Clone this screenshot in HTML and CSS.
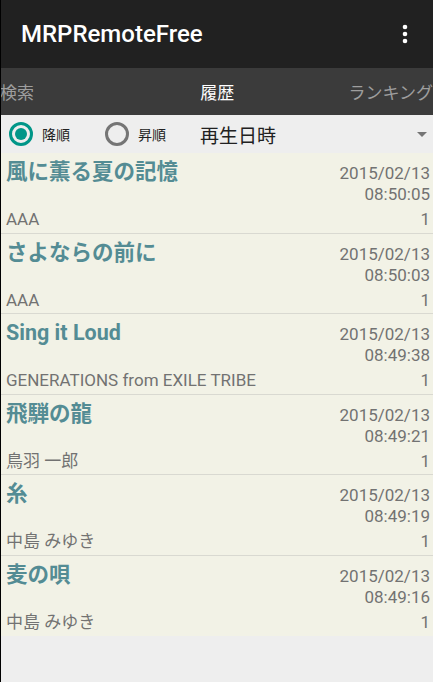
FILE: index.html
```html
<!DOCTYPE html>
<html lang="ja">
<head>
  <meta charset="UTF-8">
  <title>MRPRemoteFree</title>
  <link rel="stylesheet" href="styles.css">
</head>
<body>

  <div class="toolbar">
    <span class="app-title">MRPRemoteFree</span>
    <svg class="menu" width="6" height="20" viewBox="0 0 6 20">
      <circle cx="3" cy="3" r="2.3" fill="#fff"/>
      <circle cx="3" cy="10" r="2.3" fill="#fff"/>
      <circle cx="3" cy="17" r="2.3" fill="#fff"/>
    </svg>
  </div>

  <div class="tabs">
    <span class="tab left">検索</span>
    <span class="tab active">履歴</span>
    <span class="tab right">ランキング</span>
  </div>

  <div class="filter">
    <label class="radio"><span class="dot on"></span>降順</label>
    <label class="radio"><span class="dot"></span>昇順</label>
    <div class="spinner">
      <span>再生日時</span>
      <span class="arrow"></span>
    </div>
  </div>

  <div class="list">
    <div class="item">
      <div class="top">
        <div class="title">風に薫る夏の記憶</div>
        <div class="date">2015/02/13<br>08:50:05</div>
      </div>
      <div class="bottom"><span>AAA</span><span>1</span></div>
    </div>
    <div class="item">
      <div class="top">
        <div class="title">さよならの前に</div>
        <div class="date">2015/02/13<br>08:50:03</div>
      </div>
      <div class="bottom"><span>AAA</span><span>1</span></div>
    </div>
    <div class="item">
      <div class="top">
        <div class="title">Sing it Loud</div>
        <div class="date">2015/02/13<br>08:49:38</div>
      </div>
      <div class="bottom"><span>GENERATIONS from EXILE TRIBE</span><span>1</span></div>
    </div>
    <div class="item">
      <div class="top">
        <div class="title">飛騨の龍</div>
        <div class="date">2015/02/13<br>08:49:21</div>
      </div>
      <div class="bottom"><span>鳥羽 一郎</span><span>1</span></div>
    </div>
    <div class="item">
      <div class="top">
        <div class="title">糸</div>
        <div class="date">2015/02/13<br>08:49:19</div>
      </div>
      <div class="bottom"><span>中島 みゆき</span><span>1</span></div>
    </div>
    <div class="item">
      <div class="top">
        <div class="title">麦の唄</div>
        <div class="date">2015/02/13<br>08:49:16</div>
      </div>
      <div class="bottom"><span>中島 みゆき</span><span>1</span></div>
    </div>
  </div>

</body>
</html>
```

FILE: styles.css
```css
body {
  margin: 0;
  height: 682px;
  background: #eeeeee;
  border-left: 1px solid #000;
  font-family: Roboto, "Noto Sans CJK JP", sans-serif;
  overflow: hidden;
}
.toolbar {
  height: 68px;
  background: #212121;
  display: flex;
  align-items: center;
  padding: 0 25px 0 20px;
  justify-content: space-between;
}
.app-title {
  color: #fff;
  font-size: 24px;
  font-weight: 500;
}
.menu {
  display: block;
}
.tabs {
  height: 47px;
  background: #3b3b3b;
  display: flex;
  align-items: center;
  justify-content: space-between;
  font-size: 17px;
  color: #9e9e9e;
  white-space: nowrap;
  overflow: hidden;
}
.tab.left {
  margin-left: -1px;
}
.tab.active {
  color: #fff;
  margin-left: 52px;
}
.tab.right {
  margin-right: 0;
}
.filter {
  height: 38px;
  display: flex;
  align-items: center;
  padding-left: 8px;
  font-size: 14px;
  color: #212121;
}
.radio {
  display: flex;
  align-items: center;
  gap: 9px;
  width: 96px;
}
.dot {
  width: 24px;
  height: 24px;
  border: 3px solid #757575;
  border-radius: 50%;
  box-sizing: border-box;
  position: relative;
}
.dot.on {
  border-color: #009688;
}
.dot.on::after {
  content: "";
  position: absolute;
  left: 3px;
  top: 3px;
  width: 12px;
  height: 12px;
  border-radius: 50%;
  background: #009688;
}
.spinner {
  flex: 1;
  display: flex;
  align-items: center;
  justify-content: space-between;
  font-size: 19px;
  padding-right: 6px;
  margin-left: -1px;
}
.arrow {
  width: 0;
  height: 0;
  border-left: 5px solid transparent;
  border-right: 5px solid transparent;
  border-top: 5px solid #757575;
}
.list {
  background: #f2f2e6;
}
.item {
  height: 80.5px;
  box-sizing: border-box;
  border-bottom: 1px solid #d9d9d1;
  padding: 4px 3px 0 5px;
}
.item:last-child {
  border-bottom: none;
}
.top {
  display: flex;
  justify-content: space-between;
  height: 52px;
}
.title {
  font-size: 21.5px;
  font-weight: bold;
  color: #548c94;
  line-height: 30px;
}
.date {
  text-align: right;
  font-size: 17px;
  color: #727272;
  line-height: 21px;
  padding-top: 6px;
}
.bottom {
  display: flex;
  justify-content: space-between;
  font-size: 17px;
  color: #727272;
  line-height: 20px;
}
```
